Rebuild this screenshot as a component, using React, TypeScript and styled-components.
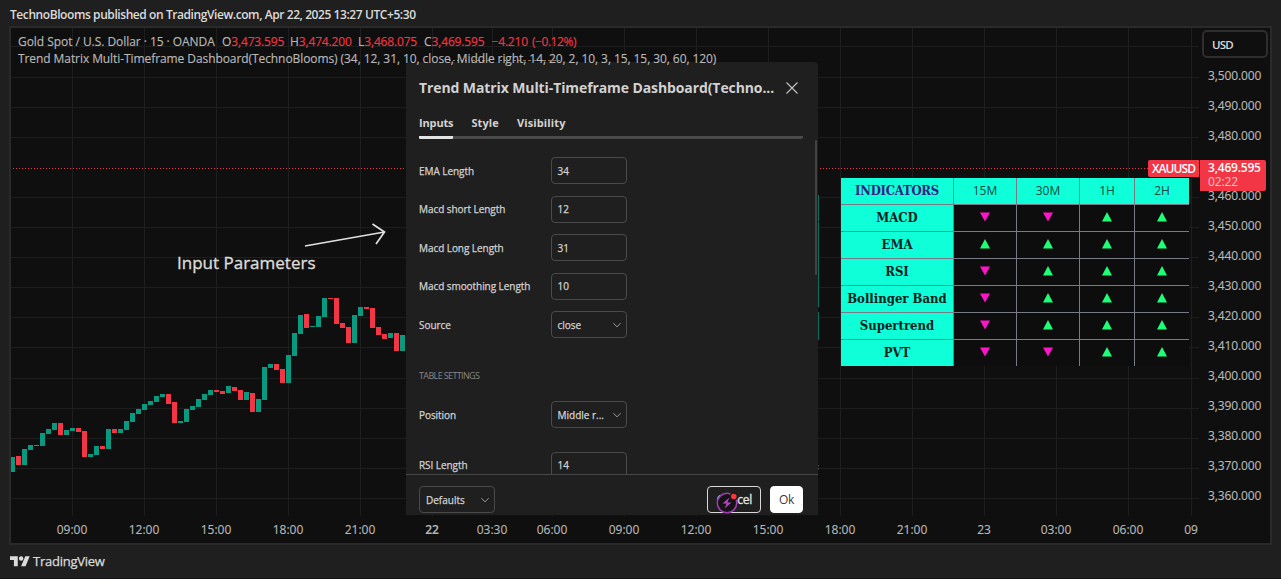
import React from 'react';
import styled, { createGlobalStyle } from 'styled-components';

const GlobalStyle = createGlobalStyle`
  * { box-sizing: border-box; }
  body { margin: 0; background: #1f1f1f; }
`;

const UP = '#089981';
const DOWN = '#f23645';

const Page = styled.div`
  width: 1281px;
  height: 579px;
  display: flex;
  flex-direction: column;
  overflow: hidden;
  background: #1f1f1f;
  border-bottom: 1px solid #171215;
  color: #dbdbdb;
  font-family: 'Open Sans', 'Noto Sans', sans-serif;
  font-size: 12px;
  white-space: nowrap;
`;

const PublishedBy = styled.header`
  height: 26px;
  padding: 6px 0 0 10px;
  font-size: 12px;
  line-height: 17px;
  font-weight: 600;
  letter-spacing: -0.42px;
`;

const Frame = styled.main`
  position: relative;
  width: 1263px;
  height: 519px;
  margin-left: 9px;
  display: grid;
  grid-template-columns: 1189px 1fr;
  grid-template-rows: 488px 1fr;
  border: 2px solid #2a2a2a;
  background: #0f0f0f;
`;

const Plot = styled.section`
  position: relative;
`;

const ChartSvg = styled.svg`
  display: block;
`;

const Legend = styled.div`
  position: absolute;
  z-index: 3;
  left: 7px;
  top: 5px;
  color: #b8b8b8;
  line-height: 17px;
  -webkit-text-stroke: 0.15px currentColor;
`;

const Quote = styled.div`
  display: grid;
  grid-template-columns: 204px 68px 68px 66px 67.5px 40.5px auto;
`;

const QuoteTitle = styled.span`
  letter-spacing: -0.05px;
`;

const QuoteValue = styled.span`
  color: ${DOWN};
  letter-spacing: -0.17px;
`;

const QuoteChange = styled(QuoteValue)`
  letter-spacing: -0.45px;
`;

const StudyTitle = styled.div`
  letter-spacing: -0.078px;
`;

const PriceAxis = styled.aside`
  position: relative;
  color: #b8b8b8;
`;

const PriceScale = styled.div`
  display: grid;
  grid-template-rows: repeat(15, 30.07px);
  align-items: center;
  padding: 32px 0 0 8px;
  letter-spacing: -0.13px;
  -webkit-text-stroke: 0.15px currentColor;
`;

const CurrencyButton = styled.button`
  position: absolute;
  left: 2px;
  top: 2px;
  width: 66px;
  height: 28px;
  padding: 0 0 0 8px;
  border: 2px solid #2e2e2e;
  border-radius: 5px;
  background: #0f0f0f;
  color: #dbdbdb;
  font: 600 11.5px 'Open Sans', sans-serif;
  letter-spacing: -0.8px;
  text-align: left;
`;

const LastPrice = styled.div`
  position: absolute;
  z-index: 2;
  left: 0;
  top: 132px;
  width: 66px;
  height: 31px;
  padding: 1px 0 0 8px;
  border-radius: 0 2px 2px 0;
  background: ${DOWN};
  color: #fff;
  font-weight: 600;
  line-height: 14px;
  letter-spacing: -0.2px;
`;

const Countdown = styled.div`
  color: #fcc4c9;
  font-weight: 400;
  letter-spacing: -0.1px;
`;

const SymbolTag = styled.div`
  position: absolute;
  right: 1px;
  top: 132px;
  width: 51px;
  height: 17px;
  border-radius: 2px 0 0 2px;
  background: ${DOWN};
  color: #fff;
  font-weight: 600;
  line-height: 18px;
  letter-spacing: -0.9px;
  text-align: center;
`;

const TimeAxis = styled.div`
  grid-column: 1 / 3;
  display: flex;
  padding: 5px 0 0 25px;
  color: #b8b8b8;
  line-height: 18px;
  -webkit-text-stroke: 0.15px currentColor;
`;

const TimeLabel = styled.span<{ $width: number; $strong?: boolean }>`
  width: ${p => p.$width}px;
  text-align: center;
  font-weight: ${p => (p.$strong ? 600 : 400)};
`;

const Annotation = styled.div`
  position: absolute;
  left: 166px;
  top: 223px;
  font-size: 17px;
  line-height: 24px;
  -webkit-text-stroke: 0.35px currentColor;
`;

const Matrix = styled.div`
  position: absolute;
  left: 830px;
  top: 150px;
  display: grid;
  grid-template-columns: 112px 62px 62px 54px 54px;
  grid-template-rows: repeat(7, 26px);
  gap: 1px;
  background: #787b86;
`;

const Cell = styled.div`
  display: flex;
  align-items: center;
  justify-content: center;
  padding-bottom: 2px;
  background: #0d0d0e;
`;

const HeadCell = styled(Cell)`
  background: #0fffd9;
  color: #0b4a40;
`;

const NameCell = styled(Cell)<{ $title?: boolean }>`
  background: #0fffd9;
  color: ${p => (p.$title ? '#3a2080' : '#04211c')};
  font: bold 13px 'DejaVu Serif Condensed', 'DejaVu Serif', serif;
  letter-spacing: ${p => (p.$title ? -0.25 : 0)}px;
`;

const Dialog = styled.section`
  position: absolute;
  z-index: 2;
  left: 394.5px;
  top: 34px;
  width: 412.5px;
  height: 453px;
  display: flex;
  flex-direction: column;
  border-radius: 4px 4px 0 0;
  background: #1f1f1f;
  color: #d2d2d2;
  font-size: 10px;
  -webkit-text-stroke: 0.25px currentColor;
`;

const DialogHeader = styled.header`
  display: flex;
  align-items: center;
  justify-content: space-between;
  height: 52px;
  padding: 0 19px 0 13.5px;
`;

const DialogTitle = styled.h2`
  margin: 0 0 1px;
  font-size: 14px;
  font-weight: 700;
  letter-spacing: -0.1px;
  -webkit-text-stroke: 0;
`;

const Tabs = styled.nav`
  display: flex;
  gap: 18px;
  height: 25px;
  margin: 0 15px 0 13.5px;
  border-bottom: 3px solid #4a4a4a;
  border-radius: 0 0 2px 2px;
  -webkit-text-stroke: 0;
`;

const Tab = styled.span<{ $active?: boolean }>`
  height: 25px;
  border-bottom: 3px solid ${p => (p.$active ? '#e4e4e4' : 'transparent')};
  border-radius: 1px;
  font-size: 11px;
  font-weight: 700;
  line-height: 18px;
  letter-spacing: ${p => (p.$active ? -0.15 : 0.12)}px;
`;

const Fields = styled.div`
  position: relative;
  height: 336px;
  padding: 18px 0 0 13.5px;
  overflow: hidden;
  border-bottom: 1px solid #484848;
`;

const Field = styled.div<{ $height?: number }>`
  display: grid;
  grid-template-columns: 131.5px 76px;
  align-items: start;
  height: ${p => p.$height ?? 38.5}px;
  line-height: 26px;
`;

const FieldLabel = styled.label`
  padding-top: 0.5px;
  letter-spacing: -0.06px;
`;

const Box = styled.div`
  display: flex;
  align-items: center;
  justify-content: space-between;
  width: 76px;
  height: 27px;
  padding: 0 4px 0 6px;
  border: 1px solid #4a4a4a;
  border-radius: 4px;
`;

const SectionTitle = styled.div`
  display: flex;
  align-items: flex-start;
  height: 51.5px;
  padding-top: 19px;
  color: #868686;
  font-size: 9px;
  line-height: 13px;
  letter-spacing: -0.63px;
  -webkit-text-stroke: 0;
`;

const ScrollThumb = styled.div`
  position: absolute;
  right: 1px;
  top: 1px;
  width: 2px;
  height: 135px;
  border-radius: 1px;
  background: #434343;
`;

const DialogFooter = styled.footer`
  display: flex;
  align-items: center;
  flex: 1;
  gap: 9px;
  padding: 9px 15px 0 13.5px;
`;

const DefaultsBox = styled(Box)`
  margin-right: auto;
`;

const Button = styled.button<{ $primary?: boolean }>`
  position: relative;
  width: ${p => (p.$primary ? 33 : 54)}px;
  height: 27px;
  padding: 0 ${p => (p.$primary ? 0 : 8)}px 0 0;
  border: 1px solid ${p => (p.$primary ? '#fff' : '#d8d8d8')};
  border-radius: 4px;
  background: ${p => (p.$primary ? '#fff' : 'transparent')};
  color: ${p => (p.$primary ? '#3a3a3a' : '#e6e6e6')};
  font: 400 12px 'Open Sans', sans-serif;
  text-align: ${p => (p.$primary ? 'center' : 'right')};
  letter-spacing: -0.3px;
  -webkit-text-stroke: ${p => (p.$primary ? 0 : 0.3)}px currentColor;
`;

const BoltBadge = styled.svg`
  position: absolute;
  left: 7px;
  top: 4px;
`;

const Brand = styled.footer`
  display: flex;
  align-items: center;
  gap: 3px;
  flex: 1;
  padding: 0 0 1px 10px;
  font-size: 13px;
  letter-spacing: -0.25px;
  -webkit-text-stroke: 0.25px currentColor;

  svg { -webkit-text-stroke: 0; }
`;

const vLines = [72, 144, 216, 288, 360, 432, 492, 552, 624, 696, 768, 840, 912, 984, 1056, 1128, 1191];
const hLines = [46, 77, 107, 137, 197, 227, 257, 287, 317, 347, 378, 408, 438, 468, 498];

// Candle bodies as [top, bottom, direction], six pixels apart.
const candles: [number, number, 0 | 1][] = [
  [457, 472, 1], [456, 465, 0], [449, 465, 1], [445, 450, 1], [445, 446, 0], [433, 446, 1],
  [429, 434, 1], [423, 430, 1], [423, 435, 0], [430, 435, 1], [428, 431, 1], [428, 432, 0],
  [431, 457, 0], [454, 457, 1], [446, 455, 1], [446, 449, 0], [429, 449, 1], [429, 433, 0],
  [429, 433, 1], [421, 430, 1], [413, 422, 1], [409, 414, 1], [404, 410, 1], [401, 405, 1],
  [396, 402, 1], [394, 397, 1], [394, 404, 0], [402, 423, 0], [421, 423, 1], [409, 422, 1],
  [406, 410, 1], [399, 407, 1], [394, 400, 1], [390, 395, 1], [390, 392, 0], [391, 394, 0],
  [386, 393, 1], [387, 391, 0], [390, 400, 0], [392, 400, 1], [393, 412, 0], [399, 412, 1],
  [367, 400, 1], [364, 368, 1], [364, 370, 0], [369, 383, 0], [355, 383, 1], [333, 356, 1],
  [315, 334, 1], [314, 328, 0], [326, 327, 1], [316, 327, 1], [298, 317, 1], [298, 299, 0],
  [298, 324, 0], [323, 328, 0], [327, 343, 0], [315, 343, 1], [307, 316, 1], [307, 309, 0],
  [308, 328, 0], [327, 335, 0], [334, 339, 0], [333, 338, 1], [333, 351, 0], [335, 351, 1],
];

const prices = Array.from({ length: 15 }, (_, i) => 3500 - i * 10);

const times: [string, number][] = [
  ['09:00', 72], ['12:00', 72], ['15:00', 72], ['18:00', 72], ['21:00', 72], ['22', 72],
  ['03:30', 48], ['06:00', 72], ['09:00', 72], ['12:00', 72], ['15:00', 72], ['18:00', 72],
  ['21:00', 72], ['23', 72], ['03:00', 72], ['06:00', 72], ['09', 54],
];

const signals: [string, string][] = [
  ['MACD', 'dduu'], ['EMA', 'uuuu'], ['RSI', 'duuu'],
  ['Bollinger Band', 'duuu'], ['Supertrend', 'duuu'], ['PVT', 'dduu'],
];

const Chevron = () => (
  <svg width="10" height="8" viewBox="0 0 10 8" fill="none" stroke="#9a9a9a">
    <path d="M1.3 2.2 5 5.8 8.7 2.2" />
  </svg>
);

const Arrow = ({ up }: { up: boolean }) => (
  <svg width="10" height="10" viewBox="0 0 10 10">
    {up ? <path d="M5 0 10 9.5H0z" fill="#1eff78" /> : <path d="M0 .5h10L5 9.5z" fill="#ff14c8" />}
  </svg>
);

const Chart = () => (
  <ChartSvg width="1189" height="488" viewBox="11 28 1189 488">
    <g fill="#1e1e1e">
      {vLines.map(x => <rect key={x} x={x} y="28" width="1" height="488" />)}
      {hLines.map(y => <rect key={y} x="11" y={y} width="1188" height="1" />)}
    </g>
    {candles.map(([top, bottom, up], i) => (
      <rect key={i} x={10 + i * 6} y={top} width="5" height={bottom - top} fill={up ? UP : DOWN} />
    ))}
    <g fill="#0a6f60">
      <rect x="817" y="195" width="2" height="26" />
      <rect x="817" y="222" width="2" height="85" />
      <rect x="817" y="312" width="2" height="28" />
    </g>
    <path d="M818.500 465v5" stroke="#4a4a4a" strokeDasharray="1.5 1.5" />
    <path d="M10 168.500H1148" stroke={DOWN} strokeDasharray="1 2" />
    <path d="M449 60.500h20M500 60.500h10" stroke="#8c8c8c" strokeDasharray="2 2" />
    <path d="M472 60.500h20M513 60.500h47" stroke="#94704a" strokeDasharray="3 2" />
    <path d="M305 246 384.500 232M372.500 224 384.500 232 376 244" fill="none" stroke="#e0e0e0" strokeWidth="1.7" />
  </ChartSvg>
);

export default function App() {
  return (
    <Page>
      <GlobalStyle />
      <PublishedBy>TechnoBlooms published on TradingView.com, Apr 22, 2025 13:27 UTC+5:30</PublishedBy>
      <Frame>
        <Plot>
          <Chart />
          <Annotation>Input Parameters</Annotation>
          <SymbolTag>XAUUSD</SymbolTag>
          <Matrix>
            <NameCell $title>INDICATORS</NameCell>
            {['15M', '30M', '1H', '2H'].map(t => <HeadCell key={t}>{t}</HeadCell>)}
            {signals.map(([name, dirs]) => (
              <React.Fragment key={name}>
                <NameCell>{name}</NameCell>
                {dirs.split('').map((d, i) => <Cell key={i}><Arrow up={d === 'u'} /></Cell>)}
              </React.Fragment>
            ))}
          </Matrix>
        </Plot>
        <PriceAxis>
          <PriceScale>
            {prices.map(p => (
              <span key={p}>{p === 3470 ? '' : `${p.toLocaleString('en-US')}.000`}</span>
            ))}
          </PriceScale>
          <CurrencyButton>USD</CurrencyButton>
          <LastPrice>
            <div>3,469.595</div>
            <Countdown>02:22</Countdown>
          </LastPrice>
        </PriceAxis>
        <TimeAxis>
          {times.map(([label, width], i) => (
            <TimeLabel key={i} $width={width} $strong={label === '22'}>{label}</TimeLabel>
          ))}
        </TimeAxis>
        <Dialog>
          <DialogHeader>
            <DialogTitle>Trend Matrix Multi-Timeframe Dashboard(Techno...</DialogTitle>
            <svg width="14" height="14" viewBox="0 0 14 14" stroke="#c4c4c4" strokeWidth="1.1">
              <path d="M1.500 1.500l11 11M12.500 1.500l-11 11" />
            </svg>
          </DialogHeader>
          <Tabs>
            <Tab $active>Inputs</Tab>
            <Tab>Style</Tab>
            <Tab>Visibility</Tab>
          </Tabs>
          <Fields>
            <Field><FieldLabel>EMA Length</FieldLabel><Box>34</Box></Field>
            <Field><FieldLabel>Macd short Length</FieldLabel><Box>12</Box></Field>
            <Field><FieldLabel>Macd Long Length</FieldLabel><Box>31</Box></Field>
            <Field><FieldLabel>Macd smoothing Length</FieldLabel><Box>10</Box></Field>
            <Field><FieldLabel>Source</FieldLabel><Box>close<Chevron /></Box></Field>
            <SectionTitle>TABLE SETTINGS</SectionTitle>
            <Field $height={50.5}><FieldLabel>Position</FieldLabel><Box>Middle r...<Chevron /></Box></Field>
            <Field><FieldLabel>RSI Length</FieldLabel><Box>14</Box></Field>
            <ScrollThumb />
          </Fields>
          <DialogFooter>
            <DefaultsBox>Defaults<Chevron /></DefaultsBox>
            <Button>
              Cancel
              <BoltBadge width="24" height="24" viewBox="0 0 24 24">
                <circle cx="12" cy="12" r="9.700" fill="#141214" stroke="#a23cb4" strokeWidth="1.500" />
                <path d="M14.500 6.500 7.500 12.600h4.200L9.500 17.500l7-6.100h-4.200z" fill="#b14cc4" />
                <circle cx="18.800" cy="5.500" r="4.200" fill="#1a1a1a" />
                <circle cx="18.800" cy="5.500" r="2.800" fill="#f7363f" />
              </BoltBadge>
            </Button>
            <Button $primary>Ok</Button>
          </DialogFooter>
        </Dialog>
        <Legend>
          <Quote>
            <QuoteTitle>Gold Spot / U.S. Dollar · 15 · OANDA</QuoteTitle>
            <span>O<QuoteValue>3,473.595</QuoteValue></span>
            <span>H<QuoteValue>3,474.200</QuoteValue></span>
            <span>L<QuoteValue>3,468.075</QuoteValue></span>
            <span>C<QuoteValue>3,469.595</QuoteValue></span>
            <QuoteValue>−4.210</QuoteValue>
            <QuoteChange>(−0.12%)</QuoteChange>
          </Quote>
          <StudyTitle>
            Trend Matrix Multi-Timeframe Dashboard(TechnoBlooms) (34, 12, 31, 10, close, Middle right, 14, 20, 2, 10, 3, 15, 15, 30, 60, 120)
          </StudyTitle>
        </Legend>
      </Frame>
      <Brand>
        <svg width="20" height="11" viewBox="0 4 36 19" fill="#dbdbdb">
          <path d="M14 22H7V11H0V4h14v18zM28 22h-8l7.500-18h8L28 22z" />
          <circle cx="20" cy="8" r="4" />
        </svg>
        TradingView
      </Brand>
    </Page>
  );
}
